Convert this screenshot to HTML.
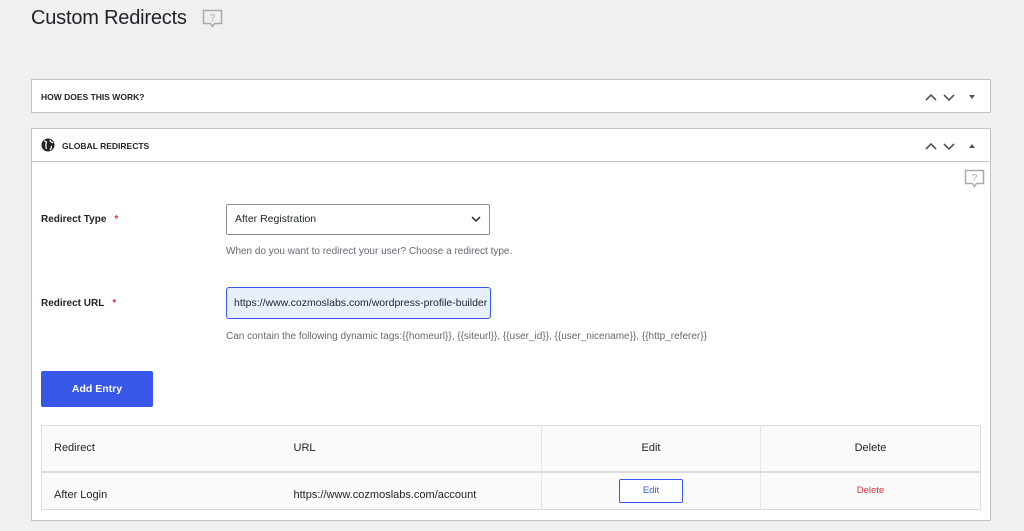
<!DOCTYPE html>
<html><head><meta charset="utf-8"><style>
*{box-sizing:border-box;margin:0;padding:0}
body{width:1024px;height:531px;background:#f0f0f1;font-family:"Liberation Sans",sans-serif;color:#1d2327;position:relative;overflow:hidden}
.a{position:absolute}
h1{position:absolute;left:31px;top:7px;font-size:20px;font-weight:400;color:#1d2327;letter-spacing:-0.2px}
.box{position:absolute;left:31px;width:960px;background:#fff;border:1px solid #c3c4c7}
.hd{font-size:8.5px;font-weight:bold;text-transform:uppercase;color:#1d2327}
.lbl{font-size:10px;font-weight:bold;color:#1d2327}
.star{color:#d63638;margin-left:8px}
.desc{font-size:10px;color:#646970}
th,td{font-size:11px;color:#1d2327}
</style></head><body>
<h1>Custom Redirects</h1>
<svg class="a" style="left:202px;top:9px" width="21" height="20" viewBox="0 0 21 20"><path d="M1.5 1.5h18v13h-7l-2 3-2-3h-7z" fill="none" stroke="#a7aaad" stroke-width="1.5"/><text x="10.5" y="12" font-size="10" text-anchor="middle" fill="#a7aaad" font-family="Liberation Sans">?</text></svg>

<div class="box" style="top:79px;height:34px">
 <div class="hd a" style="left:9px;top:12px">How does this work?</div>
 <svg class="a" style="left:892px;top:12px" width="70" height="10"><path d="M2 8l5-5 5 5M20 3l5 5 5-5" fill="none" stroke="#50575e" stroke-width="1.6"/><path d="M45 3h6l-3 4z" fill="#50575e"/></svg>
</div>

<div class="box" style="top:128px;height:393px">
 <div class="a" style="left:0;top:0;width:958px;height:33px;border-bottom:1px solid #c3c4c7"></div>
 <svg class="a" style="left:9px;top:9px" width="14" height="14" viewBox="0 0 14 14"><circle cx="7" cy="7" r="6.5" fill="#1d2327"/><path d="M3 3c2 0 3 1 2 3s1 3 0 5M9 2c0 2 2 2 3 3M10 8c1 1 0 3-1 4" stroke="#fff" stroke-width="1.3" fill="none"/></svg>
 <div class="hd a" style="left:30px;top:12px">Global Redirects</div>
 <svg class="a" style="left:892px;top:12px" width="70" height="10"><path d="M2 8l5-5 5 5M20 3l5 5 5-5" fill="none" stroke="#50575e" stroke-width="1.6"/><path d="M45 7h6l-3-4z" fill="#50575e"/></svg>
 <svg class="a" style="left:932px;top:40px" width="21" height="20" viewBox="0 0 21 20"><path d="M1.5 1.5h18v13h-7l-2 3-2-3h-7z" fill="none" stroke="#a7aaad" stroke-width="1.5"/><text x="10.5" y="12" font-size="10" text-anchor="middle" fill="#a7aaad" font-family="Liberation Sans">?</text></svg>

 <div class="lbl a" style="left:9px;top:85px">Redirect Type<span class="star">*</span></div>
 <div class="a" style="left:194px;top:75px;width:264px;height:31px;border:1px solid #8c8f94;border-radius:2px;font-size:10.5px;padding:8px 8px">After Registration
  <svg class="a" style="right:8px;top:11px" width="10" height="7"><path d="M1 1l4 4 4-4" fill="none" stroke="#1d2327" stroke-width="1.5"/></svg></div>
 <div class="desc a" style="left:194px;top:117px">When do you want to redirect your user? Choose a redirect type.</div>

 <div class="lbl a" style="left:9px;top:169px">Redirect URL<span class="star">*</span></div>
 <div class="a" style="left:194px;top:158px;width:265px;height:32px;border:1.5px solid #3858e9;border-radius:3px;background:#e8f0fe;font-size:10.5px;padding:9px 7px;white-space:nowrap;overflow:hidden">https://www.cozmoslabs.com/wordpress-profile-builder</div>
 <div class="desc a" style="left:194px;top:202px">Can contain the following dynamic tags:{{homeurl}}, {{siteurl}}, {{user_id}}, {{user_nicename}}, {{http_referer}}</div>

 <div class="a" style="left:9px;top:242px;width:112px;height:36px;background:#3858e9;border-radius:2px;color:#fff;font-size:10.5px;font-weight:bold;text-align:center;line-height:36px">Add Entry</div>

 <table class="a" style="left:9px;top:296px;width:940px;border-collapse:collapse;background:#fafafa;border:1px solid #dcdcde">
  <tr style="height:46px;border-bottom:2px solid #dcdcde">
   <th style="text-align:left;font-weight:400;padding-left:12px;width:252px">Redirect</th>
   <th style="text-align:left;font-weight:400;width:248px">URL</th>
   <th style="font-weight:400;width:219px;border-left:1px solid #e5e5e5">Edit</th>
   <th style="font-weight:400;border-left:1px solid #e5e5e5">Delete</th>
  </tr>
  <tr style="height:38px">
   <td style="padding-left:12px;padding-top:8px">After Login</td>
   <td style="padding-top:8px">https://www.cozmoslabs.com/account</td>
   <td style="border-left:1px solid #e5e5e5;text-align:center"><span style="display:inline-block;width:64px;height:24px;border:1px solid #3858e9;background:#fff;color:#3858e9;font-size:9.5px;line-height:22px;border-radius:2px">Edit</span></td>
   <td style="border-left:1px solid #e5e5e5;text-align:center;color:#d63638;font-size:9.5px">Delete</td>
  </tr>
 </table>
</div>
</body></html>
